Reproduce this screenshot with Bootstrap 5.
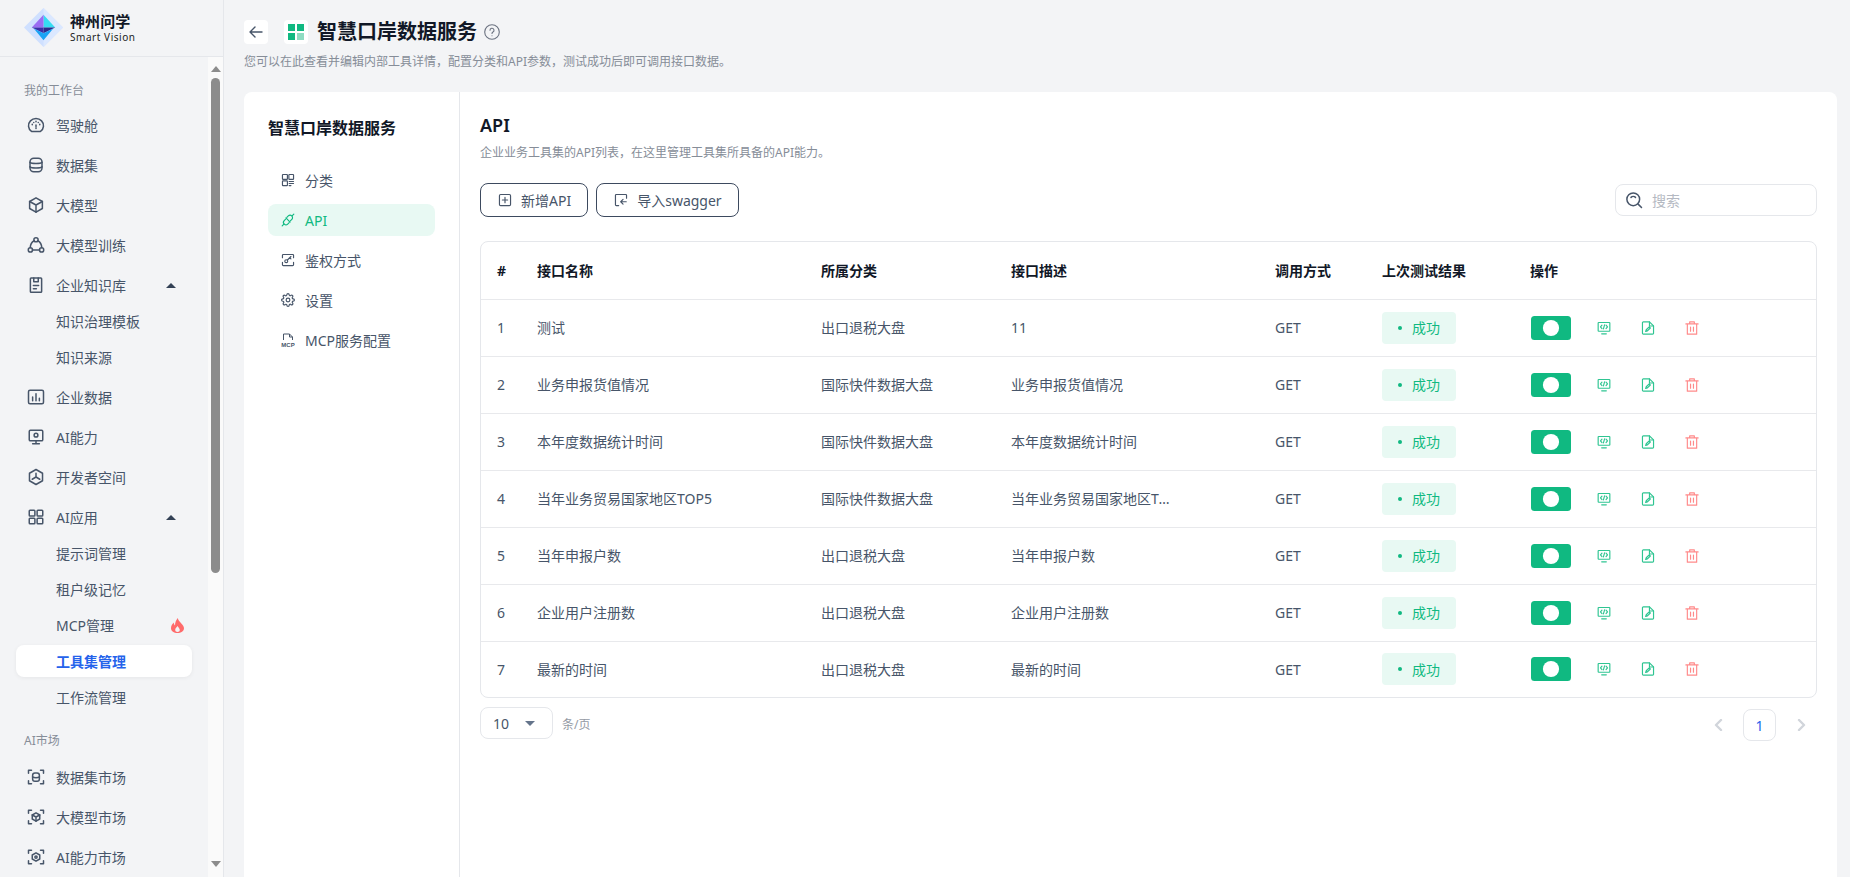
<!DOCTYPE html>
<html lang="zh-CN">
<head>
  <meta charset="UTF-8" />
  <meta name="viewport" content="width=device-width, initial-scale=1.0"/>
  <title>智慧口岸数据服务</title>
  <link href="https://cdn.jsdelivr.net/npm/bootstrap@5.3.2/dist/css/bootstrap.min.css" rel="stylesheet"/>
  <style>
    html, body { height: 100%; overflow: hidden; }
    body {
      background: #f3f4f6;
      color: #475569;
      font-family: "Noto Sans", "Noto Sans CJK SC", sans-serif;
      font-size: 14px;
    }
    .ico { width: 18px; height: 18px; flex: none; fill: none; stroke: #475569; stroke-width: 2; stroke-linecap: round; stroke-linejoin: round; }

    /* sidebar */
    .app-side { width: 224px; flex: none; border-right: 1px solid #e5e7eb; height: 877px; }
    .logo-bar { height: 57px; padding-left: 24px; padding-top: 8px; border-bottom: 1px solid #e5e7eb; gap: 7px; }
    .logo-name { font-size: 15px; font-weight: 700; color: #111827; line-height: 20px; letter-spacing: .1px; margin-top: 3px; }
    .logo-sub { font-size: 10px; color: #222; line-height: 12px; letter-spacing: .55px; white-space: nowrap; }
    .side-body { height: 820px; }
    .side-nav { width: 208px; padding: 20px 16px 0; overflow: hidden; }
    .side-label { height: 28px; padding-left: 8px; font-size: 12px; color: #868d98; line-height: 28px; }
    .side-label-market { margin-top: 14px; margin-bottom: 2px; }
    .side-item { height: 40px; padding-left: 11px; gap: 11px; color: #475569; text-decoration: none; white-space: nowrap; }
    .side-sub { height: 32px; margin-bottom: 4px; padding-left: 40px; border-radius: 8px; color: #475569; text-decoration: none; }
    .side-sub-on { background: #fff; color: #2563eb; font-weight: 600; box-shadow: 0 1px 4px rgba(0,0,0,.06); }
    .side-group-gap { margin-bottom: 1px; }
    .tri-up { width: 0; height: 0; border-left: 5px solid transparent; border-right: 5px solid transparent; border-bottom: 5px solid #334155; }
    .side-scroll { width: 15px; background: #fafafa; padding-top: 9px; }
    .arrow-up { width: 0; height: 0; border-left: 5px solid transparent; border-right: 5px solid transparent; border-bottom: 6px solid #8c8c8c; }
    .arrow-down { width: 0; height: 0; border-left: 5px solid transparent; border-right: 5px solid transparent; border-top: 6px solid #8c8c8c; margin-bottom: 10px; }
    .scroll-thumb { width: 9px; height: 495px; margin-top: 6px; background: #8c8c8c; border-radius: 5px; }

    /* page head */
    .app-main { padding: 20px 13px 0 20px; min-width: 0; }
    .head-tile { width: 24px; height: 24px; background: #fff; border-radius: 4px; }
    .tile-gap { margin-left: 16px; margin-right: 9px; }
    .page-title { font-size: 20px; font-weight: 700; color: #111827; line-height: 24px; margin: 0 7px 0 0; }
    .page-desc { font-size: 12px; color: #868d98; line-height: 18px; margin-top: 9px; margin-bottom: 21px; }

    /* card */
    .main-panel { background: #fff; border-radius: 8px 8px 0 0; height: 785px; }
    .left-menu { width: 216px; flex: none; padding: 24px 24px 0; border-right: 1px solid #e5e7eb; }
    .left-title { font-size: 16px; font-weight: 700; color: #111827; line-height: 24px; margin: 0 0 24px; white-space: nowrap; }
    .left-item { height: 32px; margin-bottom: 8px; padding-left: 13px; gap: 10px; border-radius: 8px; color: #475569; text-decoration: none; white-space: nowrap; }
    .left-item .ico { width: 14px; height: 14px; }
    .left-item-on { background: #e8f9f3; color: #10b981; }
    .left-item-on .ico { stroke: #10b981; }
    .content-pane { padding: 20px 20px 0; min-width: 0; }
    .pane-title { font-size: 18px; font-weight: 600; color: #111827; line-height: 26px; margin: 0; }
    .pane-desc { font-size: 12px; color: #868d98; line-height: 18px; margin: 6px 0 21px; }
    .tool-btn { height: 34px; padding: 0 16px 0 17px; gap: 9px; border: 1px solid #3d4a5f; border-radius: 8px; background: #fff; color: #475569; font-size: 14px; }
    .tool-btn .ico { width: 14px; height: 14px; }
    .search-box { width: 202px; height: 32px; padding-left: 9px; gap: 7px; border: 1px solid #e5e7eb; border-radius: 8px; }
    .search-box input { border: 0; outline: 0; width: 150px; font-size: 14px; color: #475569; background: transparent; }
    .search-box input::placeholder { color: #b4b9c2; }

    /* table */
    .tbl-box { margin-top: 24px; border: 1px solid #e5e7eb; border-radius: 8px; overflow: hidden; }
    .api-table { table-layout: fixed; width: 100%; margin: 0; --bs-table-color: #475569; --bs-table-border-color: #e8e9ec; }
    .api-table th { height: 57px; padding: 0 0 0 16px; font-weight: 700; color: #111827; vertical-align: middle; }
    .api-table td { height: 57px; padding: 0 0 0 16px; vertical-align: middle; color: #475569; }
    .api-table tr:last-child td { border-bottom: 0; height: 56px; }
    .cell-clip { max-width: 160px; overflow: hidden; white-space: nowrap; text-overflow: ellipsis; }
    .ok-tag { width: 74px; height: 32px; padding-left: 16px; gap: 10px; background: #e8f9f3; color: #10b981; border-radius: 4px; }
    .ok-dot { width: 4px; height: 4px; border-radius: 50%; background: #10b981; }
    .api-switch.form-check-input { width: 40px; height: 24px; margin: 0 0 0 1px; border: 0; background-color: #10b981; box-shadow: none; float: none;
      background-image: url("data:image/svg+xml,%3csvg xmlns='http://www.w3.org/2000/svg' viewBox='-4 -4 8 8'%3e%3ccircle r='2.7' fill='%23fff'/%3e%3c/svg%3e"); }
    .act-ico { width: 14px; height: 14px; flex: none; fill: none; stroke: #2fc592; stroke-width: 2; stroke-linecap: round; stroke-linejoin: round; margin-left: 30px; }
    .act-first { margin-left: 26px; }
    .act-del { stroke: #ff8a8a; }

    /* footer */
    .pager-row { margin-top: 9px; }
    .size-pick { width: 73px; height: 32px; padding: 0 12px; border: 1px solid #e5e7eb; border-radius: 8px; color: #475569; }
    .tri-down { width: 0; height: 0; border-left: 5px solid transparent; border-right: 5px solid transparent; border-top: 5px solid #64748b; margin-right: 5px; }
    .size-note { margin-left: 9px; margin-top: 3px; font-size: 12px; color: #949aa4; }
    .page-cell { width: 33px; height: 32px; margin-top: 2px; color: #d1d5db; }
    .page-cell svg { width: 12px; height: 12px; fill: none; stroke: #d1d5db; stroke-width: 2.4; stroke-linecap: round; stroke-linejoin: round; }
    .page-on { border: 1px solid #e5e7eb; border-radius: 8px; color: #2563eb; }
  </style>
</head>
<body>

<svg width="0" height="0" class="position-absolute">
  <defs>
    <symbol id="i-gauge" viewBox="0 0 24 24"><path d="M6 20.5a10 9.5 0 1 1 12 0z"/><path d="M12 15.5v1M12 7v.5M7 11v.5M17 11v.5M9 8.5v.2M15 8.5v.2M12 12v2"/></symbol>
    <symbol id="i-db" viewBox="0 0 24 24"><rect x="4" y="3" width="16" height="18" rx="5"/><path d="M4 8.5c2 2 14 2 16 0M4 14.5c2 2 14 2 16 0"/></symbol>
    <symbol id="i-cube" viewBox="0 0 24 24"><path d="M12 2.5l8.5 4.8v9.4L12 21.5l-8.5-4.8V7.300z"/><path d="M3.500 7.300L12 12l8.500-4.700M12 12v9.500"/></symbol>
    <symbol id="i-train" viewBox="0 0 24 24"><circle cx="12" cy="5" r="2.800"/><circle cx="4.500" cy="18.500" r="2.800"/><circle cx="19.500" cy="18.500" r="2.800"/><path d="M7.300 18.500h9.400M9.500 6.300C6.500 8 4.500 11.500 4.300 15.500M14.500 6.300c3 1.700 5 5.200 5.200 9.200"/></symbol>
    <symbol id="i-book" viewBox="0 0 24 24"><rect x="4.500" y="2.500" width="15" height="19" rx="1"/><path d="M9 2.500v5h6v-5M8.500 12.500h7M8.500 17h4"/></symbol>
    <symbol id="i-chart" viewBox="0 0 24 24"><rect x="2" y="3" width="20" height="18" rx="2"/><path d="M7.500 17v-5M12 17V7.500M16.500 17v-3.500"/></symbol>
    <symbol id="i-screen" viewBox="0 0 24 24"><rect x="3" y="3" width="18" height="14" rx="1.500"/><circle cx="12" cy="9.500" r="2.500"/><path d="M12 17v4M7.500 21h9"/></symbol>
    <symbol id="i-dev" viewBox="0 0 24 24"><path d="M12 2l8.700 5v10L12 22l-8.700-5V7z"/><path d="M12 12V7M12 12l-5 3M12 12l5 3"/></symbol>
    <symbol id="i-apps" viewBox="0 0 24 24"><rect x="3" y="3" width="7.500" height="7.500" rx="1"/><rect x="13.500" y="3" width="7.500" height="7.500" rx="1"/><rect x="3" y="13.500" width="7.500" height="7.500" rx="1"/><rect x="13.500" y="13.500" width="7.500" height="7.500" rx="1"/></symbol>
    <symbol id="i-mkt-db" viewBox="0 0 24 24"><path d="M2 7V3h4M18 3h4v4M22 17v4h-4M6 21H2v-4"/><rect x="7.500" y="6.500" width="9" height="11" rx="3"/><path d="M7.500 12c2 1.200 7 1.200 9 0"/></symbol>
    <symbol id="i-mkt-cube" viewBox="0 0 24 24"><path d="M2 7V3h4M18 3h4v4M22 17v4h-4M6 21H2v-4"/><path d="M12 6.500l5 2.800v5.400l-5 2.800-5-2.800V9.300z"/><path d="M7 9.300l5 2.700 5-2.700M12 12v5.500"/></symbol>
    <symbol id="i-mkt-ai" viewBox="0 0 24 24"><path d="M2 7V3h4M18 3h4v4M22 17v4h-4M6 21H2v-4"/><path d="M12 6.500l5 2.800v5.400l-5 2.800-5-2.800V9.300z"/><circle cx="12" cy="12" r="1.500"/></symbol>
    <symbol id="i-cat" viewBox="0 0 24 24"><rect x="2.500" y="2.500" width="8.500" height="8.500" rx="1"/><rect x="13.500" y="2.500" width="8" height="8.500" rx="1"/><rect x="2.500" y="13.500" width="8.500" height="8" rx="1"/><path d="M14 14.500h7.500M14 18h7.500M14 21.500h3"/></symbol>
    <symbol id="i-link" viewBox="0 0 24 24"><path d="M10 7.500l2.500-2.500a4 4 0 0 1 6 6L16 13.500"/><path d="M8 10.500L5.500 13a4 4 0 0 0 6 6l2.500-2.500"/><path d="M8.500 8.500l7 7M2 22l3-3M19 5l3-3"/></symbol>
    <symbol id="i-key" viewBox="0 0 24 24"><path d="M2.500 8V4a1.500 1.500 0 0 1 1.500-1.500h16A1.500 1.500 0 0 1 21.500 4v4M2.500 16v4A1.500 1.500 0 0 0 4 21.500h16a1.500 1.500 0 0 0 1.500-1.500v-4"/><circle cx="9" cy="14" r="2.500"/><path d="M11 12l6-6M15 8l2 2"/></symbol>
    <symbol id="i-gear" viewBox="0 0 24 24"><circle cx="12" cy="12" r="3.200"/><path d="M19.400 15a1.650 1.650 0 0 0 .33 1.820l.06.06a2 2 0 0 1 0 2.830 2 2 0 0 1-2.830 0l-.06-.06a1.650 1.650 0 0 0-1.820-.33 1.650 1.650 0 0 0-1 1.510V21a2 2 0 0 1-2 2 2 2 0 0 1-2-2v-.09A1.650 1.650 0 0 0 9 19.400a1.650 1.650 0 0 0-1.820.33l-.06.06a2 2 0 0 1-2.830 0 2 2 0 0 1 0-2.830l.06-.06a1.650 1.650 0 0 0 .33-1.820 1.650 1.650 0 0 0-1.510-1H3a2 2 0 0 1-2-2 2 2 0 0 1 2-2h.09A1.650 1.650 0 0 0 4.600 9a1.650 1.650 0 0 0-.33-1.820l-.06-.06a2 2 0 0 1 0-2.830 2 2 0 0 1 2.830 0l.06.06a1.650 1.650 0 0 0 1.820.33H9a1.650 1.650 0 0 0 1-1.510V3a2 2 0 0 1 2-2 2 2 0 0 1 2 2v.09a1.650 1.650 0 0 0 1 1.510 1.650 1.650 0 0 0 1.820-.33l.06-.06a2 2 0 0 1 2.830 0 2 2 0 0 1 0 2.830l-.06.06a1.650 1.650 0 0 0-.33 1.820V9a1.650 1.650 0 0 0 1.510 1H21a2 2 0 0 1 2 2 2 2 0 0 1-2 2h-.09a1.650 1.650 0 0 0-1.510 1z"/></symbol>
    <symbol id="i-plus" viewBox="0 0 24 24"><rect x="2.500" y="2.500" width="19" height="19" rx="2"/><path d="M12 7.500v9M7.500 12h9"/></symbol>
    <symbol id="i-import" viewBox="0 0 24 24"><path d="M21.500 9V4A1.500 1.500 0 0 0 20 2.500H4A1.500 1.500 0 0 0 2.500 4v16A1.500 1.500 0 0 0 4 21.500h4"/><path d="M21 15h-9M15.500 11L11.500 15l4 4"/></symbol>
    <symbol id="i-search" viewBox="0 0 24 24"><circle cx="11" cy="11" r="8.500"/><path d="M17.500 17.500L22 22M8 8.500c1.500-1.500 4.500-1.500 6 0"/></symbol>
    <symbol id="i-code" viewBox="0 0 24 24"><rect x="2" y="2.500" width="20" height="15" rx="1"/><path d="M8 22h8M8.500 7L6 10l2.500 3M15.500 7L18 10l-2.500 3M13 6.500L11 13.500"/></symbol>
    <symbol id="i-edit" viewBox="0 0 24 24"><path d="M14.500 1.500H4A1.500 1.500 0 0 0 2.500 3v18A1.500 1.500 0 0 0 4 22.500h16a1.500 1.500 0 0 0 1.500-1.500V8.500z"/><path d="M14.500 1.500v7h7M8 18l1-3 5-5 2 2-5 5z"/></symbol>
    <symbol id="i-trash" viewBox="0 0 24 24"><path d="M1.500 5h21M8 5V1.500h8V5M4 5v17.500h16V5M9.500 10.500v7M14.500 10.500v7"/></symbol>
  </defs>
</svg>

<div class="d-flex">
  <aside class="app-side">
    <div class="logo-bar d-flex">
      <svg width="39" height="39" viewBox="0 0 40 40">
        <polygon points="20,0 40,20 20,40 0,20" fill="#cfe0ff"/>
        <polygon points="20,0 20,40 40,20" fill="#dbe8ff"/>
        <polygon points="20,7 32,20 20,20" fill="#35dcf2"/>
        <polygon points="20,7 8,20 20,20" fill="#9a6cf2"/>
        <polygon points="8,20 20,20 20,26" fill="#3a2ea8"/>
        <polygon points="32,20 20,20 20,26" fill="#2b2a8c"/>
        <polygon points="10,21 20,33 30,21 20,26" fill="#1aa3f5"/>
      </svg>
      <div>
        <div class="logo-name">神州问学</div>
        <div class="logo-sub">Smart Vision</div>
      </div>
    </div>
    <div class="side-body d-flex">
      <nav class="side-nav">
        <div class="side-label">我的工作台</div>
        <a class="side-item d-flex align-items-center" href="#"><svg class="ico"><use href="#i-gauge"/></svg>驾驶舱</a>
        <a class="side-item d-flex align-items-center" href="#"><svg class="ico"><use href="#i-db"/></svg>数据集</a>
        <a class="side-item d-flex align-items-center" href="#"><svg class="ico"><use href="#i-cube"/></svg>大模型</a>
        <a class="side-item d-flex align-items-center" href="#"><svg class="ico"><use href="#i-train"/></svg>大模型训练</a>
        <a class="side-item d-flex align-items-center" href="#"><svg class="ico"><use href="#i-book"/></svg><span class="flex-grow-1">企业知识库</span><span class="tri-up me-3"></span></a>
        <div class="side-group-gap">
          <a class="side-sub d-flex align-items-center" href="#">知识治理模板</a>
          <a class="side-sub d-flex align-items-center" href="#">知识来源</a>
        </div>
        <a class="side-item d-flex align-items-center" href="#"><svg class="ico"><use href="#i-chart"/></svg>企业数据</a>
        <a class="side-item d-flex align-items-center" href="#"><svg class="ico"><use href="#i-screen"/></svg>AI能力</a>
        <a class="side-item d-flex align-items-center" href="#"><svg class="ico"><use href="#i-dev"/></svg>开发者空间</a>
        <a class="side-item d-flex align-items-center" href="#"><svg class="ico"><use href="#i-apps"/></svg><span class="flex-grow-1">AI应用</span><span class="tri-up me-3"></span></a>
        <a class="side-sub d-flex align-items-center" href="#">提示词管理</a>
        <a class="side-sub d-flex align-items-center" href="#">租户级记忆</a>
        <a class="side-sub d-flex align-items-center" href="#"><span class="flex-grow-1">MCP管理</span>
          <svg class="me-2" width="13" height="15" viewBox="0 0 13 15"><path fill="#ff6b6b" d="M6.800 0c.5 2.500 2 3.600 3.300 5.200C11.700 7 13 8.600 13 10.200 13 13 10 15 6.500 15S0 13 0 10.200C0 8 1.200 6 2.800 4.500c0 1.300.4 2.300 1.200 2.900C4 4.800 5 2 6.800 0zm-.2 8C5.700 9.300 4.200 10.300 4.200 12c0 1.200 1 2 2.300 2s2.300-.8 2.300-2C8.800 10.500 7.300 9.500 6.600 8z"/></svg>
        </a>
        <a class="side-sub side-sub-on d-flex align-items-center" href="#">工具集管理</a>
        <a class="side-sub d-flex align-items-center" href="#">工作流管理</a>
        <div class="side-label side-label-market">AI市场</div>
        <a class="side-item d-flex align-items-center" href="#"><svg class="ico"><use href="#i-mkt-db"/></svg>数据集市场</a>
        <a class="side-item d-flex align-items-center" href="#"><svg class="ico"><use href="#i-mkt-cube"/></svg>大模型市场</a>
        <a class="side-item d-flex align-items-center" href="#"><svg class="ico"><use href="#i-mkt-ai"/></svg>AI能力市场</a>
      </nav>
      <div class="side-scroll d-flex flex-column align-items-center">
        <div class="arrow-up"></div>
        <div class="scroll-thumb"></div>
        <div class="flex-grow-1"></div>
        <div class="arrow-down"></div>
      </div>
    </div>
  </aside>

  <main class="app-main flex-grow-1">
    <div class="d-flex align-items-center">
      <span class="head-tile d-flex align-items-center justify-content-center">
        <svg width="14" height="14" viewBox="0 0 14 14" fill="none" stroke="#475569" stroke-width="1.400" stroke-linecap="round" stroke-linejoin="round"><path d="M13 7H1M6 2L1 7l5 5"/></svg>
      </span>
      <span class="head-tile tile-gap d-flex align-items-center justify-content-center">
        <svg width="16" height="16" viewBox="0 0 16 16"><rect width="7" height="7" fill="#10b981"/><rect x="9" width="7" height="7" fill="#10b981"/><rect y="9" width="7" height="7" fill="#10b981"/><rect x="9" y="9" width="7" height="7" fill="#8fdcc2"/></svg>
      </span>
      <h1 class="page-title">智慧口岸数据服务</h1>
      <svg width="16" height="16" viewBox="0 0 16 16" fill="none" stroke="#6b7280" stroke-width="1.100" stroke-linecap="round"><circle cx="8" cy="8" r="7.300"/><path d="M6 6.300a2 2 0 1 1 3 1.700c-.7.400-1 .8-1 1.500M8 11.700v.1"/></svg>
    </div>
    <p class="page-desc">您可以在此查看并编辑内部工具详情，配置分类和API参数，测试成功后即可调用接口数据。</p>

    <div class="main-panel d-flex">
      <div class="left-menu">
        <h2 class="left-title">智慧口岸数据服务</h2>
        <a class="left-item d-flex align-items-center" href="#"><svg class="ico"><use href="#i-cat"/></svg>分类</a>
        <a class="left-item left-item-on d-flex align-items-center" href="#"><svg class="ico"><use href="#i-link"/></svg>API</a>
        <a class="left-item d-flex align-items-center" href="#"><svg class="ico"><use href="#i-key"/></svg>鉴权方式</a>
        <a class="left-item d-flex align-items-center" href="#"><svg class="ico"><use href="#i-gear"/></svg>设置</a>
        <a class="left-item d-flex align-items-center" href="#">
          <svg width="14" height="14" viewBox="0 0 14 14" fill="none" stroke="#475569" stroke-width="1"><path d="M2.500 7V1h6l3 3v3M8.500 1v3h3"/><text x="7" y="13.500" text-anchor="middle" font-size="6" font-weight="700" fill="#475569" stroke="none" font-family="Liberation Sans, sans-serif">MCP</text></svg>
          MCP服务配置
        </a>
      </div>

      <div class="content-pane flex-grow-1">
        <h2 class="pane-title">API</h2>
        <p class="pane-desc">企业业务工具集的API列表，在这里管理工具集所具备的API能力。</p>
        <div class="d-flex align-items-center justify-content-between">
          <div class="d-flex gap-2">
            <button class="tool-btn d-flex align-items-center" type="button"><svg class="ico"><use href="#i-plus"/></svg>新增API</button>
            <button class="tool-btn d-flex align-items-center" type="button"><svg class="ico"><use href="#i-import"/></svg>导入swagger</button>
          </div>
          <div class="search-box d-flex align-items-center">
            <svg class="ico ico-search"><use href="#i-search"/></svg>
            <input type="text" placeholder="搜索">
          </div>
        </div>

        <div class="tbl-box">
          <table class="table api-table">
            <colgroup>
              <col width="40"><col width="284"><col width="190"><col width="264"><col width="107"><col width="148"><col width="302">
            </colgroup>
            <thead>
              <tr><th>#</th><th>接口名称</th><th>所属分类</th><th>接口描述</th><th>调用方式</th><th>上次测试结果</th><th>操作</th></tr>
            </thead>
            <tbody id="apiRows"></tbody>
          </table>
        </div>

        <div class="pager-row d-flex justify-content-between align-items-start">
          <div class="d-flex align-items-center">
            <div class="size-pick d-flex align-items-center justify-content-between"><span>10</span><span class="tri-down"></span></div>
            <span class="size-note">条/页</span>
          </div>
          <div class="d-flex gap-2">
            <span class="page-cell d-flex align-items-center justify-content-center"><svg viewBox="0 0 12 12"><path d="M8 1L3 6l5 5"/></svg></span>
            <span class="page-cell page-on d-flex align-items-center justify-content-center">1</span>
            <span class="page-cell d-flex align-items-center justify-content-center"><svg viewBox="0 0 12 12"><path d="M4 1l5 5-5 5"/></svg></span>
          </div>
        </div>
      </div>
    </div>
  </main>
</div>

<script src="https://cdn.jsdelivr.net/npm/bootstrap@5.3.2/dist/js/bootstrap.bundle.min.js"></script>
<script>
  const apis = [
    ["测试", "出口退税大盘", "11"],
    ["业务申报货值情况", "国际快件数据大盘", "业务申报货值情况"],
    ["本年度数据统计时间", "国际快件数据大盘", "本年度数据统计时间"],
    ["当年业务贸易国家地区TOP5", "国际快件数据大盘", "当年业务贸易国家地区TOP5"],
    ["当年申报户数", "出口退税大盘", "当年申报户数"],
    ["企业用户注册数", "出口退税大盘", "企业用户注册数"],
    ["最新的时间", "出口退税大盘", "最新的时间"]
  ];
  document.getElementById("apiRows").innerHTML = apis.map((a, i) => `
    <tr>
      <td>${i + 1}</td>
      <td>${a[0]}</td>
      <td>${a[1]}</td>
      <td><div class="cell-clip">${a[2]}</div></td>
      <td>GET</td>
      <td><span class="ok-tag d-flex align-items-center"><span class="ok-dot"></span>成功</span></td>
      <td>
        <div class="d-flex align-items-center">
          <input class="form-check-input api-switch" type="checkbox" role="switch" checked>
          <svg class="act-ico act-first"><use href="#i-code"/></svg>
          <svg class="act-ico"><use href="#i-edit"/></svg>
          <svg class="act-ico act-del"><use href="#i-trash"/></svg>
        </div>
      </td>
    </tr>`).join("");
</script>
</body>
</html>
